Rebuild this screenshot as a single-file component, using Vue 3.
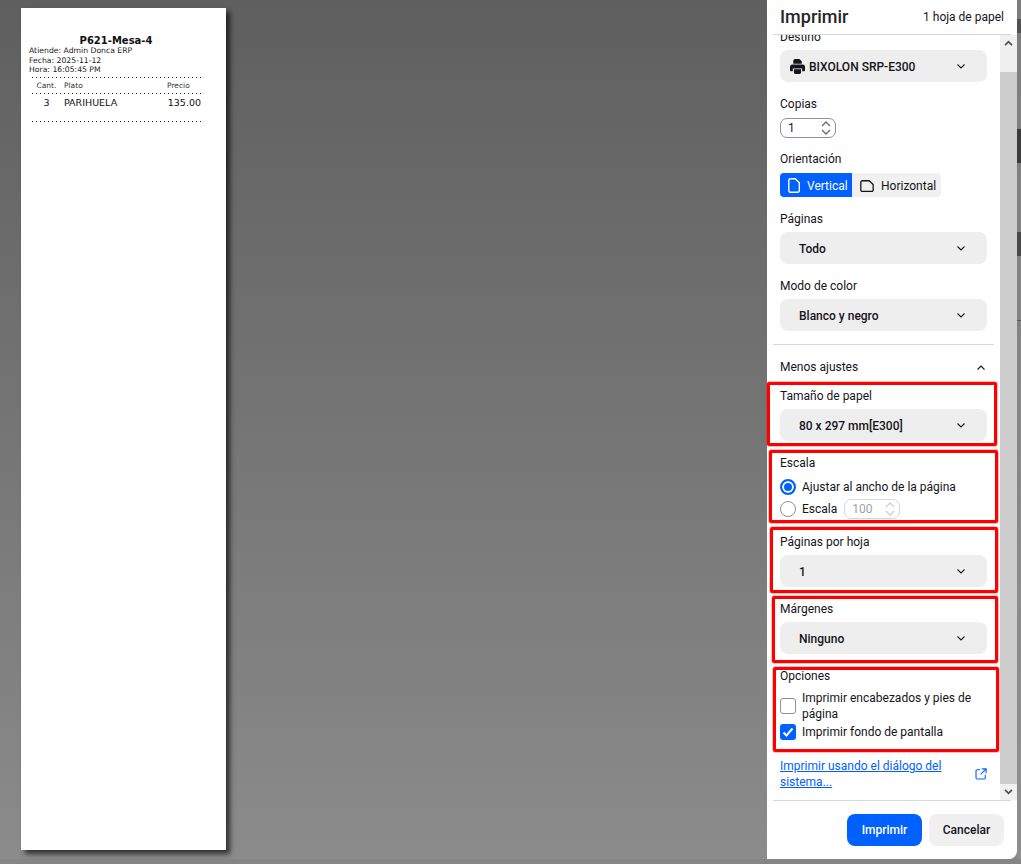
<script setup>
const ticket = { title: 'P621-Mesa-4', info: ['Atiende: Admin Donca ERP', 'Fecha: 2025-11-12', 'Hora: 16:05:45 PM'] }
const marks = [
  { x: 767, y: 382, w: 230, h: 64 },
  { x: 769, y: 450, w: 229, h: 73 },
  { x: 770, y: 527, w: 228, h: 66 },
  { x: 772, y: 596, w: 226, h: 67 },
  { x: 773, y: 667, w: 226, h: 85 }
]
</script>

<template>
  <div class="page">
    <main class="preview">
      <div class="sheet">
        <h1 class="t-title">{{ ticket.title }}</h1>
        <p v-for="line in ticket.info" :key="line" class="t-info">{{ line }}</p>
        <div class="t-dots first"></div>
        <div class="t-head"><span class="c1">Cant.</span><span class="c2">Plato</span><span class="c3">Precio</span></div>
        <div class="t-dots"></div>
        <div class="t-row"><span class="c1">3</span><span class="c2">PARIHUELA</span><span class="c3">135.00</span></div>
        <div class="t-dots last"></div>
      </div>
    </main>

    <aside class="panel">
      <header class="head">
        <span class="title">Imprimir</span>
        <span class="sheets">1 hoja de papel</span>
      </header>

      <div class="scroller">
        <div class="content">
          <section class="sec dest">
            <label>Destino</label>
            <div class="select">
              <span class="val with-icon">
                <svg class="printer" viewBox="0 0 16 16" width="15" height="15"><path fill="#15141a" d="M3.500 2A2 2 0 0 1 5.500 0h4.500l2.500 2.500V5h-9zM2.500 5.800h11A2.500 2.500 0 0 1 16 8.300V12a1 1 0 0 1-1 1h-2v-3H3v3H1a1 1 0 0 1-1-1V8.300a2.500 2.500 0 0 1 2.500-2.500zM4.200 11h7.600v3.500a1.500 1.500 0 0 1-1.500 1.500H5.700a1.500 1.500 0 0 1-1.500-1.500z"/></svg>
                BIXOLON SRP-E300
              </span>
              <svg class="chev" viewBox="0 0 8 5" width="8" height="5"><path d="M.5.5L4 4 7.500.5" fill="none" stroke="#15141a" stroke-width="1.100"/></svg>
            </div>
          </section>

          <section class="sec">
            <label>Copias</label>
            <div class="num">
              <span>1</span>
              <svg viewBox="0 0 10 16" width="10" height="16"><path d="M1 6l4-4 4 4M1 10l4 4 4-4" fill="none" stroke="#6b6b70" stroke-width="1.300"/></svg>
            </div>
          </section>

          <section class="sec orient-sec">
            <label>Orientación</label>
            <div class="orient">
              <span class="seg on">
                <svg viewBox="0 0 12 15" width="12" height="15"><path d="M.8 2.300A1.500 1.500 0 0 1 2.300.8h5l4 4v8a1.500 1.500 0 0 1-1.500 1.500H2.300A1.500 1.500 0 0 1 .8 12.800z" fill="none" stroke="#fff" stroke-width="1.400"/></svg>
                Vertical
              </span>
              <span class="seg">
                <svg viewBox="0 0 15 13" width="14" height="12"><path d="M2.300.8h7.500l4.400 4v6a1.500 1.500 0 0 1-1.500 1.500H2.300A1.500 1.500 0 0 1 .8 10.800V2.300A1.500 1.500 0 0 1 2.300.8z" fill="none" stroke="#15141a" stroke-width="1.400"/></svg>
                Horizontal
              </span>
            </div>
          </section>

          <section class="sec">
            <label>Páginas</label>
            <div class="select"><span class="val">Todo</span><svg class="chev" viewBox="0 0 8 5" width="8" height="5"><path d="M.5.5L4 4 7.500.5" fill="none" stroke="#15141a" stroke-width="1.100"/></svg></div>
          </section>

          <section class="sec">
            <label>Modo de color</label>
            <div class="select"><span class="val">Blanco y negro</span><svg class="chev" viewBox="0 0 8 5" width="8" height="5"><path d="M.5.5L4 4 7.500.5" fill="none" stroke="#15141a" stroke-width="1.100"/></svg></div>
          </section>

          <div class="rule"></div>

          <div class="more">
            <span>Menos ajustes</span>
            <svg viewBox="0 0 8 5" width="8" height="5"><path d="M.5 4.500L4 1l3.500 3.500" fill="none" stroke="#15141a" stroke-width="1.100"/></svg>
          </div>

          <section class="sec">
            <label>Tamaño de papel</label>
            <div class="select"><span class="val">80 x 297 mm[E300]</span><svg class="chev" viewBox="0 0 8 5" width="8" height="5"><path d="M.5.5L4 4 7.500.5" fill="none" stroke="#15141a" stroke-width="1.100"/></svg></div>
          </section>

          <section class="sec scale">
            <label>Escala</label>
            <div class="radio-row"><span class="radio on"></span><span>Ajustar al ancho de la página</span></div>
            <div class="radio-row"><span class="radio"></span><span>Escala</span>
              <div class="num small"><span>100</span><svg viewBox="0 0 10 16" width="10" height="16"><path d="M1 6l4-4 4 4M1 10l4 4 4-4" fill="none" stroke="#d0d0d3" stroke-width="1.300"/></svg></div>
            </div>
          </section>

          <section class="sec">
            <label>Páginas por hoja</label>
            <div class="select"><span class="val">1</span><svg class="chev" viewBox="0 0 8 5" width="8" height="5"><path d="M.5.5L4 4 7.500.5" fill="none" stroke="#15141a" stroke-width="1.100"/></svg></div>
          </section>

          <section class="sec">
            <label>Márgenes</label>
            <div class="select"><span class="val">Ninguno</span><svg class="chev" viewBox="0 0 8 5" width="8" height="5"><path d="M.5.5L4 4 7.500.5" fill="none" stroke="#15141a" stroke-width="1.100"/></svg></div>
          </section>

          <section class="sec opts">
            <label>Opciones</label>
            <div class="check-row"><span class="check"></span><span class="check-text">Imprimir encabezados y pies de página</span></div>
            <div class="check-row second">
              <span class="check on"><svg viewBox="0 0 16 16" width="16" height="16"><path d="M3.500 8.500l3 3 6-7" fill="none" stroke="#fff" stroke-width="2"/></svg></span>
              <span class="check-text">Imprimir fondo de pantalla</span>
            </div>
          </section>

          <div class="sys">
            <a href="#" @click.prevent>Imprimir usando el diálogo del sistema...</a>
            <svg viewBox="0 0 14 14" width="12" height="12"><path d="M6 2H2.500A1.300 1.300 0 0 0 1.200 3.300v8.200a1.300 1.300 0 0 0 1.300 1.300h8.200a1.300 1.300 0 0 0 1.300-1.300V8M8 1h5v5M13 1L6.500 7.500" fill="none" stroke="#0061ff" stroke-width="1.300"/></svg>
          </div>
        </div>

        <div class="scrollbar">
          <span class="sb-btn"><svg viewBox="0 0 10 7" width="9" height="6"><path d="M1 6l4-4 4 4" fill="none" stroke="#505050" stroke-width="2"/></svg></span>
          <span class="sb-thumb"></span>
          <span class="sb-btn low"><svg viewBox="0 0 10 7" width="9" height="6"><path d="M1 1l4 4 4-4" fill="none" stroke="#505050" stroke-width="2"/></svg></span>
        </div>
      </div>

      <footer class="foot">
        <button class="btn primary">Imprimir</button>
        <button class="btn">Cancelar</button>
      </footer>
    </aside>

    <div class="edge">
      <i class="bit b1"></i>
      <i class="bit b2"></i>
      <i class="bit b3"></i>
      <i class="bit b4"></i>
    </div>

    <div v-for="(m, i) in marks" :key="i" class="mark"
      :style="{ left: m.x + 'px', top: m.y + 'px', width: m.w + 'px', height: m.h + 'px' }"></div>
  </div>
</template>

<style>
html, body { margin: 0; background: #7a7a7a; }
</style>

<style scoped>
.page {
  position: relative;
  width: 1021px;
  height: 864px;
  overflow: hidden;
  display: flex;
  align-items: flex-start;
  font-family: Roboto, "Open Sans", sans-serif;
  font-size: 12px;
  color: #15141a;
  background: #858585;
}
.preview {
  width: 767px;
  height: 859px;
  flex: none;
  padding: 8px 0 0 21px;
  box-sizing: border-box;
  background: linear-gradient(#5f5f5f, #8b8b8b);
}
.sheet {
  width: 205px;
  height: 842px;
  box-sizing: border-box;
  padding: 27px 25px 0 8px;
  background: #fff;
  box-shadow: 4px 4px 5px rgba(0, 0, 0, .65);
  font-family: "DejaVu Sans", sans-serif;
  color: #111;
}
.t-title { margin: 0; font-size: 10px; line-height: 11px; text-align: center; font-weight: 700; padding-left: 2px; }
.t-info { margin: 0; font-size: 7.700px; line-height: 9.500px; color: #222; }
.t-dots {
  height: 1px;
  background: repeating-linear-gradient(270deg, #222 0 1px, transparent 1px 4px);
}
.t-dots.first { margin-top: 2px; }
.t-dots.last { margin-top: 9px; }
.t-head, .t-row { display: flex; align-items: center; }
.t-head { height: 15px; font-size: 7.500px; color: #333; }
.t-row { height: 18px; font-size: 9.500px; }
.c1 { width: 35px; text-align: center; flex: none; }
.c2 { flex: 1; }
.c3 { width: 34px; text-align: right; flex: none; }
.t-head .c3 { text-align: left; }

.panel {
  width: 250px;
  height: 859px;
  flex: none;
  background: #fff;
  border-bottom-right-radius: 8px;
  display: flex;
  flex-direction: column;
}
.head {
  height: 34px;
  margin: 0 6px;
  padding: 0 7px;
  border-bottom: 1px solid #d7d7db;
  display: flex;
  justify-content: space-between;
  align-items: center;
}
.title { font-size: 18px; font-weight: 500; line-height: 34px; color: #26262b; }
.scroller { flex: 1; display: flex; min-height: 0; overflow: hidden; }
.content { flex: 1; min-width: 0; overflow: hidden; padding: 0 13px; box-sizing: border-box; }
.sec { display: flex; flex-direction: column; margin-bottom: 13px; }
.sec label { line-height: 18px; height: 18px; margin-bottom: 4px; }
.dest { margin-top: -7px; }
.select {
  height: 32px;
  box-sizing: border-box;
  border-radius: 8px;
  background: #eeeeee;
  display: flex;
  align-items: center;
  justify-content: space-between;
  padding: 1px 22px 0 19px;
  font-weight: 500;
}
.with-icon { display: flex; align-items: center; gap: 4px; margin-left: -9px; }
.printer { flex: none; }
.num {
  width: 56px;
  height: 20px;
  box-sizing: border-box;
  margin-top: 1px;
  border: 1px solid #8f8f9d;
  border-radius: 7px;
  display: flex;
  align-items: center;
  justify-content: space-between;
  padding: 0 4px 0 7px;
}
.orient-sec { margin-top: -1px; }
.orient { display: flex; width: 161px; height: 24px; background: #f0f0f0; border-radius: 4px; margin-top: 1px; overflow: hidden; }
.seg { display: flex; align-items: center; gap: 7px; padding: 1px 0 0 8px; width: 89px; box-sizing: border-box; }
.seg.on { width: 72px; background: #0061ff; color: #fff; }
.rule { height: 1px; background: #d7d7db; margin: 0 0 13px -7px; width: 221px; }
.more { display: flex; align-items: center; justify-content: space-between; height: 18px; padding-right: 2px; margin-bottom: 11px; }
.scale label { margin-bottom: 4px; }
.radio-row { display: flex; align-items: center; gap: 6px; height: 22px; }
.radio { width: 16px; height: 16px; box-sizing: border-box; border-radius: 50%; border: 1px solid #8f8f9d; flex: none; }
.radio.on { border: 2px solid #0061ff; background: #0061ff; box-shadow: inset 0 0 0 2px #fff; }
.num.small { margin: 0 0 0 1px; border-color: #d7d7db; color: #a0a0a5; }
.opts { margin-bottom: 18px; }
.opts label { margin-bottom: 5px; }
.check-row { display: flex; align-items: center; gap: 6px; line-height: 16px; padding-right: 4px; }
.check-row.second { margin-top: 2px; }
.check { width: 16px; height: 16px; box-sizing: border-box; border: 1px solid #8f8f9d; border-radius: 3px; flex: none; display: flex; }
.check.on { border: 0; background: #0061ff; }
.sys { display: flex; align-items: center; justify-content: space-between; line-height: 16px; }
.sys a { color: #0061ff; width: 170px; }
.scrollbar { width: 17px; flex: none; display: flex; flex-direction: column; background: #f0f0f0; }
.sb-btn { height: 16px; display: flex; align-items: center; justify-content: center; flex: none; }
.sb-btn:first-child { height: 37px; align-items: flex-start; padding-top: 5px; box-sizing: border-box; }
.sb-thumb { flex: 1; background: #cdcdcd; }
.foot {
  height: 59px;
  margin: 0 6px;
  padding: 13px 7px 0 0;
  border-top: 1px solid #d7d7db;
  display: flex;
  justify-content: flex-end;
  gap: 7px;
  box-sizing: border-box;
}
.btn {
  width: 75px;
  height: 32px;
  border: 0;
  border-radius: 8px;
  background: #f0f0f0;
  color: #15141a;
  font: 500 12px Roboto, "Open Sans", sans-serif;
  padding: 0;
}
.btn.primary { background: #0061ff; color: #fff; }
.edge {
  width: 4px;
  height: 859px;
  flex: none;
  position: relative;
  background: linear-gradient(#7d7d7d, #8f8f8f);
}
.bit { position: absolute; left: 0; width: 4px; }
.b1 { top: 19px; height: 14px; background: #3f3f3f; opacity: .7; }
.b2 { top: 129px; height: 34px; background: #3c3c3c; }
.b3 { top: 232px; height: 24px; background: #3a3a3a; opacity: .8; }
.b4 { top: 320px; height: 1px; background: #5a5a5a; }
.mark {
  position: absolute;
  box-sizing: border-box;
  border: 3px solid #f00;
  border-radius: 2px;
  box-shadow: 0 0 0 .5px rgba(255, 0, 0, .5);
  pointer-events: none;
}
</style>
